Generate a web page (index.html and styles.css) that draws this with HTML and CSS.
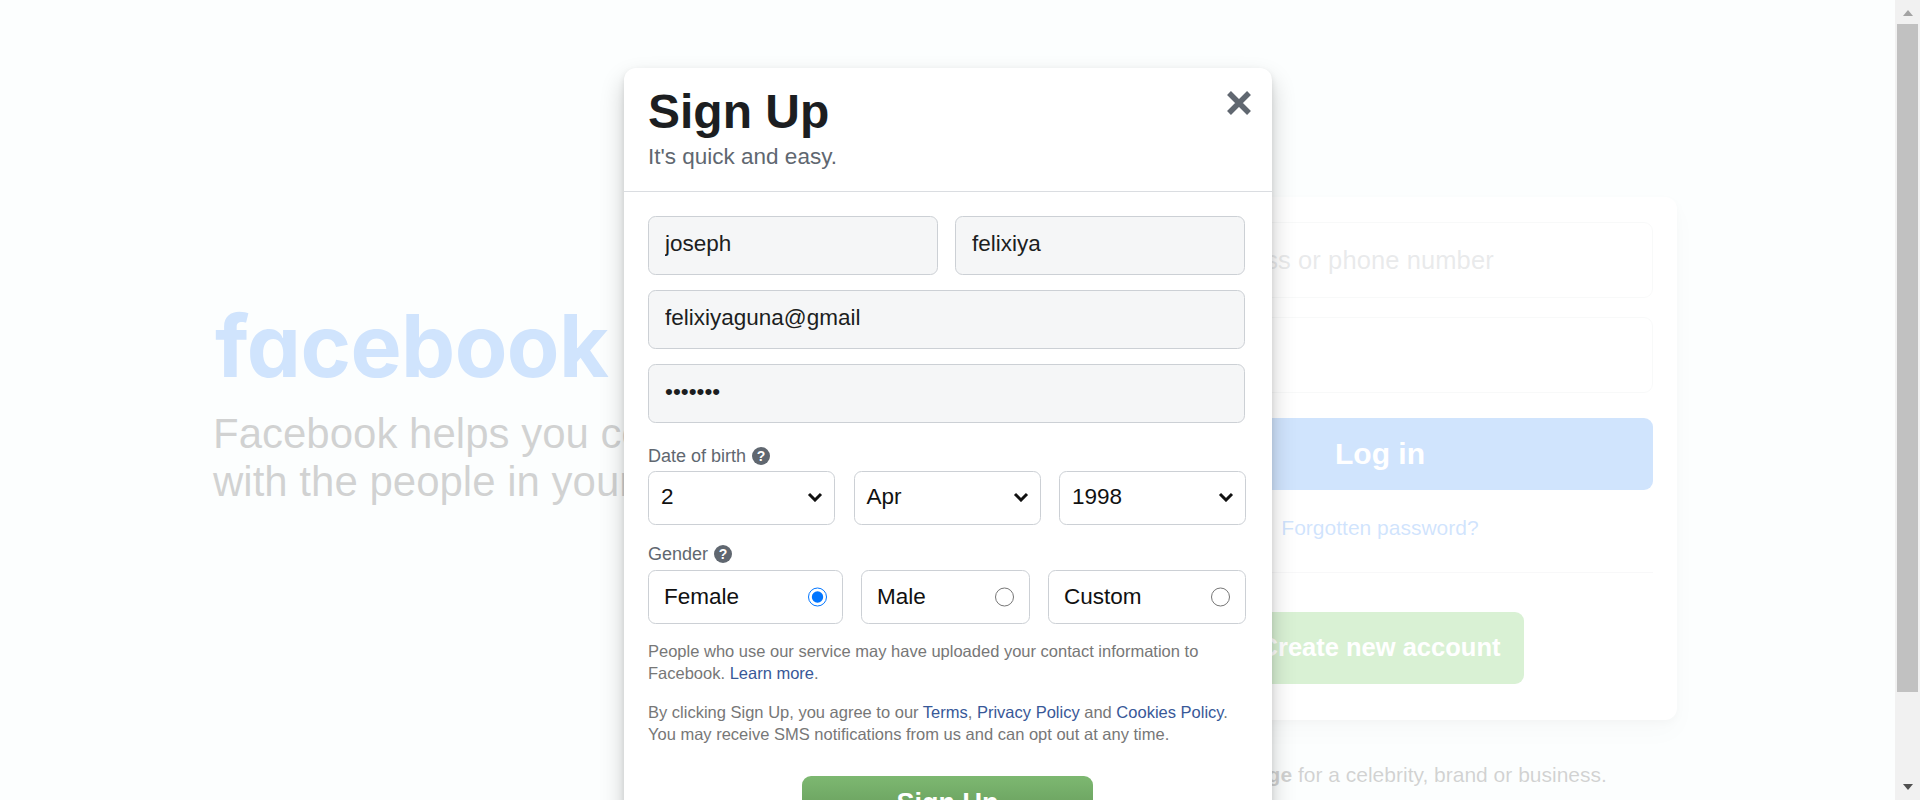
FILE: index.html
```html
<!DOCTYPE html>
<html lang="en">
<head>
<meta charset="utf-8">
<title>Facebook - log in or sign up</title>
<link rel="stylesheet" href="styles.css">
</head>
<body>
<div class="viewport">
  <main class="page">
    <section class="intro">
      <div class="logo">facebook</div>
      <p class="tagline">Facebook helps you connect and share with the people in your life.</p>
    </section>
    <section class="login">
      <div class="card">
        <input class="card-input" type="text" placeholder="Email address or phone number">
        <input class="card-input" type="password" placeholder="">
        <button class="login-btn" type="button">Log in</button>
        <a class="forgot" href="#">Forgotten password?</a>
        <div class="card-divider"></div>
        <button class="create-btn" type="button">Create new account</button>
      </div>
      <p class="page-note"><b>Create a Page</b> for a celebrity, brand or business.</p>
    </section>
  </main>
  <div class="backdrop"></div>
  <div class="modal">
    <header class="modal-head">
      <h1 class="modal-title">Sign Up</h1>
      <p class="modal-sub">It's quick and easy.</p>
      <svg class="close" width="24" height="24" viewBox="0 0 24 24"><path d="M2 2L22 22M22 2L2 22" stroke="#606770" stroke-width="5.5" fill="none"/></svg>
    </header>
    <form class="modal-body">
      <div class="name-row">
        <input class="field field-first" type="text" value="joseph">
        <input class="field" type="text" value="felixiya">
      </div>
      <input class="field" type="text" value="felixiyaguna@gmail">
      <input class="field" type="password" value="1234567">

      <div class="label label-dob">Date of birth <span class="help">?</span></div>
      <div class="select-row">
        <div class="select"><span>2</span><svg class="chev" width="16" height="10" viewBox="0 0 16 10"><path d="M2 2L8 8L14 2" stroke="#111" stroke-width="3" fill="none"/></svg></div>
        <div class="select"><span>Apr</span><svg class="chev" width="16" height="10" viewBox="0 0 16 10"><path d="M2 2L8 8L14 2" stroke="#111" stroke-width="3" fill="none"/></svg></div>
        <div class="select"><span>1998</span><svg class="chev" width="16" height="10" viewBox="0 0 16 10"><path d="M2 2L8 8L14 2" stroke="#111" stroke-width="3" fill="none"/></svg></div>
      </div>

      <div class="label label-gender">Gender <span class="help">?</span></div>
      <div class="radio-row">
        <label class="radio radio-female"><span>Female</span><input type="radio" name="gender" checked></label>
        <label class="radio radio-male"><span>Male</span><input type="radio" name="gender"></label>
        <label class="radio radio-custom"><span>Custom</span><input type="radio" name="gender"></label>
      </div>

      <p class="legal legal-first">People who use our service may have uploaded your contact information to Facebook. <a href="#">Learn more</a>.</p>
      <p class="legal legal-second">By clicking Sign Up, you agree to our <a href="#">Terms</a>, <a href="#">Privacy Policy</a> and <a href="#">Cookies Policy</a>. You may receive SMS notifications from us and can opt out at any time.</p>

      <div class="submit-wrap"><button class="submit" type="button">Sign Up</button></div>
    </form>
  </div>
</div>
<div class="scrollbar">
  <div class="arrow arrow-up"></div>
  <div class="thumb"></div>
  <div class="arrow arrow-down"></div>
</div>
</body>
</html>
```

FILE: styles.css
```css
* { box-sizing: border-box; }
html, body { height: 100%; }
body {
  margin: 0;
  display: flex;
  height: 800px;
  overflow: hidden;
  font-family: "Liberation Sans", Arial, sans-serif;
  color: #1c1e21;
  background: #f0fafa;
}
.viewport { position: relative; flex: 1; height: 800px; overflow: hidden; }

/* Page behind the dialog */
.page { display: flex; padding: 197px 0 0 213px; }
.intro { width: 870px; padding-top: 97px; }
.logo {
  padding-left: 2px;
  font-family: Inter, "Liberation Sans", sans-serif;
  font-feature-settings: "cv11" 1;
  font-weight: 700;
  font-size: 86px;
  line-height: 104px;
  letter-spacing: -.6px;
  color: #1877f2;
}
.tagline {
  margin: 12px 0 0;
  width: 750px;
  font-size: 42px;
  line-height: 48px;
}
.login { width: 594px; display: flex; flex-direction: column; }
.card {
  width: 594px;
  height: 523px;
  padding: 25px 24px 36px;
  background: #fff;
  border-radius: 12px;
  box-shadow: 0 3px 6px rgba(0,0,0,.1), 0 12px 24px rgba(0,0,0,.1);
  display: flex;
  flex-direction: column;
  align-items: center;
}
.card-input {
  width: 546px;
  height: 76px;
  flex: none;
  margin-bottom: 19px;
  padding: 0 20px;
  border: 1px solid #dddfe2;
  border-radius: 9px;
  background: #fff;
  font: 25.5px "Liberation Sans", Arial, sans-serif;
  letter-spacing: .1px;
}
.card-input::placeholder { color: #90949c; }
.login-btn {
  width: 546px;
  height: 72px;
  flex: none;
  margin-top: 6px;
  padding-bottom: 2px;
  border: 0;
  border-radius: 9px;
  background: #1877f2;
  color: #fff;
  font: bold 30px "Liberation Sans", Arial, sans-serif;
}
.forgot {
  margin-top: 26px;
  font-size: 21px;
  line-height: 24px;
  color: #1877f2;
  text-decoration: none;
}
.card-divider { width: 546px; height: 1px; flex: none; margin-top: 32px; background: #dadde1; }
.create-btn {
  width: 288px;
  height: 72px;
  flex: none;
  margin-top: 39px;
  padding-bottom: 2px;
  border: 0;
  border-radius: 9px;
  background: #42b72a;
  color: #fff;
  font: bold 25.5px "Liberation Sans", Arial, sans-serif;
}
.page-note { margin: 43px 0 0; text-align: center; font-size: 21px; line-height: 24px; }

.backdrop { position: absolute; inset: 0; background: rgba(255,255,255,.8); }

/* Sign up dialog */
.modal {
  position: absolute;
  left: 624px;
  top: 68px;
  width: 648px;
  height: 900px;
  background: #fff;
  border-radius: 12px;
  box-shadow: 0 3px 6px rgba(0,0,0,.1), 0 12px 24px rgba(0,0,0,.2);
}
.modal-head {
  position: relative;
  height: 124px;
  padding: 15px 24px 0;
  border-bottom: 1px solid #dadde1;
}
.modal-title { margin: 0; font-size: 48px; line-height: 57px; font-weight: 700; }
.modal-sub { margin: 3px 0 0; font-size: 22.5px; line-height: 28px; color: #606770; }
.close { position: absolute; right: 21px; top: 23px; }
.modal-body { padding: 24px 27px 0 24px; display: flex; flex-direction: column; }
.name-row { display: flex; gap: 17px; }
.field {
  display: block;
  width: 100%;
  min-width: 0;
  height: 59px;
  flex: none;
  margin-bottom: 15px;
  padding: 0 16px 3px;
  border: 1px solid #ccd0d5;
  border-radius: 7.5px;
  background: #f5f6f7;
  color: #1c1e21;
  font: 22.5px "Liberation Sans", Arial, sans-serif;
}
.name-row .field { flex: 1; }
.name-row .field-first { flex: none; width: 290px; }
.label {
  display: flex;
  align-items: center;
  gap: 6px;
  height: 22px;
  font-size: 18px;
  color: #606770;
}
.label-dob { margin: 7px 0 4px; }
.label-gender { margin: 18px 0 5px; }
.help {
  width: 18px;
  height: 18px;
  border-radius: 50%;
  background: #606770;
  color: #fff;
  font-size: 14px;
  font-weight: 700;
  line-height: 18px;
  text-align: center;
}
.select-row { display: flex; gap: 18.5px; width: 598px; }
.select {
  flex: 1;
  height: 54px;
  display: flex;
  align-items: center;
  justify-content: space-between;
  padding: 0 11px 2px 12px;
  border: 1px solid #ccd0d5;
  border-radius: 7.5px;
  font-size: 22.5px;
  color: #111;
}
.radio-row { display: flex; gap: 18px; width: 598px; }
.radio {
  height: 54px;
  display: flex;
  align-items: center;
  justify-content: space-between;
  padding: 0 15px;
  border: 1px solid #ccd0d5;
  border-radius: 7.5px;
  font-size: 22.5px;
  color: #111;
}
.radio input { width: 19.5px; height: 19.5px; margin: 0; flex: none; }
.radio-female { width: 195px; }
.radio-male { width: 169px; }
.radio-custom { width: 198px; }
.legal { margin: 0; font-size: 16.5px; line-height: 22px; color: #777; }
.legal a { color: #385898; text-decoration: none; }
.legal-first { margin-top: 16px; }
.legal-second { margin-top: 17px; }
.submit-wrap { display: flex; justify-content: center; margin-top: 31px; padding-left: 2px; }
.submit {
  width: 291px;
  height: 54px;
  border: 0;
  border-radius: 9px;
  background: linear-gradient(#7db871, #5f9354);
  color: #fff;
  font: bold 27px "Liberation Sans", Arial, sans-serif;
}

/* Browser scrollbar */
.scrollbar {
  width: 25px;
  height: 800px;
  flex: none;
  background: #f1f1f1;
  display: flex;
  flex-direction: column;
  align-items: center;
  padding-top: 10px;
}
.arrow { width: 0; height: 0; border-left: 5.5px solid transparent; border-right: 5.5px solid transparent; flex: none; }
.arrow-up { border-bottom: 6px solid #a3a3a3; }
.arrow-down { border-top: 6px solid #505050; margin-top: 92px; }
.thumb { width: 21px; height: 668px; flex: none; margin-top: 8px; background: #c1c1c1; }
```
